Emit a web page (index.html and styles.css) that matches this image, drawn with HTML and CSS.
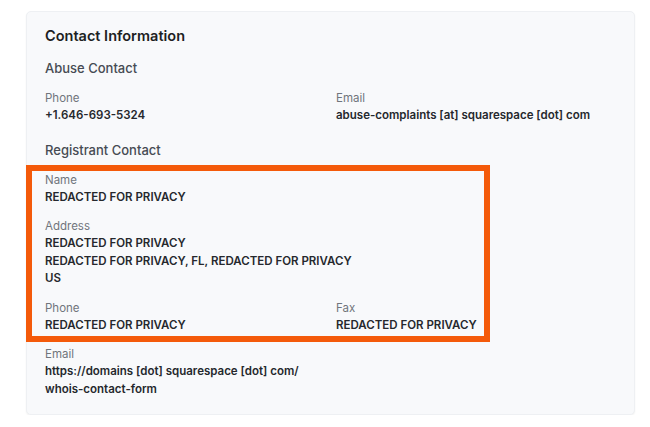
FILE: index.html
```html
<!DOCTYPE html>
<html lang="en">
<head>
    <meta charset="UTF-8">
    <meta name="viewport" content="width=device-width, initial-scale=1.0">
    <title>Contact Information</title>
    <link rel="stylesheet" href="styles.css">
</head>
<body>
    <div class="card">
        <h2 class="card-title">Contact Information</h2>

        <div class="section">
            <h3 class="section-title">Abuse Contact</h3>
            <div class="fields">
                <div class="field">
                    <div class="label">Phone</div>
                    <div class="value">+1.646-693-5324</div>
                </div>
                <div class="field">
                    <div class="label">Email</div>
                    <div class="value">abuse-complaints [at] squarespace [dot] com</div>
                </div>
            </div>
        </div>

        <div class="section">
            <h3 class="section-title">Registrant Contact</h3>
            <div class="fields">
                <div class="field wide">
                    <div class="label">Name</div>
                    <div class="value">REDACTED FOR PRIVACY</div>
                </div>
                <div class="field wide">
                    <div class="label">Address</div>
                    <div class="value">REDACTED FOR PRIVACY<br>REDACTED FOR PRIVACY, FL, REDACTED FOR PRIVACY<br>US</div>
                </div>
                <div class="field">
                    <div class="label">Phone</div>
                    <div class="value">REDACTED FOR PRIVACY</div>
                </div>
                <div class="field">
                    <div class="label">Fax</div>
                    <div class="value">REDACTED FOR PRIVACY</div>
                </div>
                <div class="field">
                    <div class="label">Email</div>
                    <div class="value">https://domains [dot] squarespace [dot] com/<br>whois-contact-form</div>
                </div>
            </div>
        </div>

        <!-- annotation drawn over the redacted fields -->
        <div class="highlight"></div>
    </div>
</body>
</html>
```

FILE: styles.css
```css
body {
    margin: 0;
    background-color: #ffffff;
    font-family: Inter, "Noto Sans", sans-serif;
    color: #1f2328;
}

.card {
    position: relative;
    margin: 11px 16px 0 26px;
    width: 571px;
    padding: 15px 18px 0;
    background-color: #f8f9fb;
    border: 1px solid #eef0f3;
    border-radius: 5px;
    box-shadow: 0 1px 2px rgba(0,0,0,0.06);
}

.card-title {
    margin: 0 0 14px;
    font-size: 14.5px;
    font-weight: 600;
    line-height: 18px;
    color: #1d1f23;
}

.section-title {
    margin: 0 0 12px;
    font-size: 13px;
    font-weight: 500;
    line-height: 18px;
    color: #464b53;
}

.section {
    margin-bottom: 16px;
}

.fields {
    display: grid;
    grid-template-columns: 1fr 1fr;
    column-gap: 11px;
    row-gap: 11px;
}

.field.wide {
    grid-column: 1 / -1;
}

.label {
    font-size: 11.5px;
    line-height: 18px;
    color: #70757c;
}

.value {
    font-size: 11.5px;
    font-weight: 600;
    line-height: 17.5px;
    color: #25282d;
}

.highlight {
    position: absolute;
    left: -1px;
    top: 153px;
    width: 452px;
    height: 165px;
    border: 6px solid #f45a0a;
    pointer-events: none;
}
```
